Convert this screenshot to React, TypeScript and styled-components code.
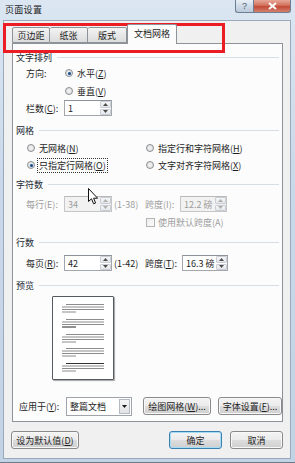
import React from "react";
import styled, { createGlobalStyle, css } from "styled-components";

const GlobalStyle = createGlobalStyle`
  html, body {
    margin: 0;
    padding: 0;
    background: #ffffff;
  }
  body {
    font-family: "Noto Sans CJK SC", "Liberation Sans", sans-serif;
    font-size: 9px;
    color: #1e1e1e;
  }
  * {
    box-sizing: border-box;
  }
`;

const PAGE_GROUPS = [7, 22, 37, 51, 66];

const App: React.FC = () => {
  return (
    <>
      <GlobalStyle />
      <Window>
        <TitleBar>
          <TitleText>页面设置</TitleText>
          <CaptionButtons>
            <CaptionButton $variant="help">?</CaptionButton>
            <CaptionButton $variant="close">
              <svg width="9" height="8" viewBox="0 0 9 8">
                <path d="M1 1 L8 7 M8 1 L1 7" stroke="#ffffff" strokeWidth="2" />
              </svg>
            </CaptionButton>
          </CaptionButtons>
        </TitleBar>

        <Client>
          <TabRow>
            <Tab $w={38}>页边距</Tab>
            <Tab $w={38}>纸张</Tab>
            <Tab $w={39}>版式</Tab>
            <Tab $w={50} $active>
              文档网格
            </Tab>
          </TabRow>

          <Panel>
            <GroupHeader>
              <span>文字排列</span>
              <HeaderLine />
            </GroupHeader>
            <Row $h={16} $indent={10}>
              <Label $w={39}>方向:</Label>
              <Radio $checked />
              <span>
                水平(<u>Z</u>)
              </span>
            </Row>
            <Row $h={16} $mt={2} $indent={49}>
              <Radio />
              <span>
                垂直(<u>V</u>)
              </span>
            </Row>
            <Row $h={18} $indent={10}>
              <Label $w={38}>
                栏数(<u>C</u>):
              </Label>
              <SpinBox value="1" width={48} />
            </Row>

            <GroupHeader $mt={5}>
              <span>网格</span>
              <HeaderLine />
            </GroupHeader>
            <RadioGrid $mt={2}>
              <RadioItem>
                <Radio />
                <span>
                  无网格(<u>N</u>)
                </span>
              </RadioItem>
              <RadioItem>
                <Radio />
                <span>
                  指定行和字符网格(<u>H</u>)
                </span>
              </RadioItem>
              <RadioItem>
                <Radio $checked />
                <FocusLabel>
                  只指定行网格(<u>O</u>)
                </FocusLabel>
              </RadioItem>
              <RadioItem>
                <Radio />
                <span>
                  文字对齐字符网格(<u>X</u>)
                </span>
              </RadioItem>
            </RadioGrid>

            <GroupHeader $mt={3}>
              <span>字符数</span>
              <HeaderLine />
            </GroupHeader>
            <Row $h={18} $mt={3} $indent={10} $disabled>
              <Label $w={38}>每行(E):</Label>
              <SpinBox value="34" width={48} disabled />
              <Label $w={31} $ml={2}>
                (1-38)
              </Label>
              <Label $w={35}>跨度(I):</Label>
              <SpinBox value="12.2 磅" width={47} disabled />
            </Row>
            <Row $h={16} $mt={1} $indent={130} $disabled>
              <CheckBox />
              <span>使用默认跨度(A)</span>
            </Row>

            <GroupHeader $mt={4}>
              <span>行数</span>
              <HeaderLine />
            </GroupHeader>
            <Row $h={18} $mt={4} $indent={10}>
              <Label $w={38}>
                每页(<u>R</u>):
              </Label>
              <SpinBox value="42" width={48} />
              <Label $w={31} $ml={2}>
                (1-42)
              </Label>
              <Label $w={37}>
                跨度(<u>T</u>):
              </Label>
              <SpinBox value="16.3 磅" width={46} />
            </Row>

            <GroupHeader $mt={5}>
              <span>预览</span>
              <HeaderLine />
            </GroupHeader>
            <PreviewArea>
              <PreviewPage>
                <svg width="60" height="82" viewBox="0 0 60 82">
                  {PAGE_GROUPS.map((y, i) => (
                    <g key={y} strokeWidth="1">
                      <line x1="13" x2="51" y1={y + 0.5} y2={y + 0.5} stroke={i === 4 ? "#333" : "#8c8c8c"} />
                      <line x1="9" x2="51" y1={y + 3} y2={y + 3} stroke="#8c8c8c" />
                      <line x1="9" x2="51" y1={y + 5.5} y2={y + 5.5} stroke="#8c8c8c" />
                      <line x1="9" x2="23" y1={y + 8} y2={y + 8} stroke={i === 1 ? "#222" : "#8c8c8c"} />
                    </g>
                  ))}
                </svg>
              </PreviewPage>
            </PreviewArea>

            <Row $h={20} $mt={15} $indent={3}>
              <Label $w={47}>
                应用于(<u>Y</u>):
              </Label>
              <Select>
                <SelectText>整篇文档</SelectText>
                <SelectArrow>
                  <svg width="5" height="3" viewBox="0 0 5 3">
                    <path d="M0 0 L5 0 L2.5 3 Z" fill="#1a1a1a" />
                  </svg>
                </SelectArrow>
              </Select>
              <Button $w={68} $ml={11}>
                绘图网格(<u>W</u>)...
              </Button>
              <Button $w={64} $ml={7}>
                字体设置(<u>F</u>)...
              </Button>
            </Row>
          </Panel>

          <BottomRow>
            <Button $w={68}>
              设为默认值(<u>D</u>)
            </Button>
            <Spacer />
            <Button $w={53} $default>
              确定
            </Button>
            <Button $w={53} $ml={8}>
              取消
            </Button>
          </BottomRow>
        </Client>

        <Highlight />
        <Cursor>
          <svg width="11" height="17" viewBox="0 0 11 17">
            <path
              d="M0.5 0.5 L0.5 13.5 L3.5 10.8 L5.6 15.8 L7.6 15 L5.6 10.2 L9.6 10.2 Z"
              fill="#ffffff"
              stroke="#111111"
              strokeWidth="1"
              strokeLinejoin="round"
            />
          </svg>
        </Cursor>
      </Window>
    </>
  );
};

export default App;

interface SpinBoxProps {
  value: string;
  width: number;
  disabled?: boolean;
}

const SpinBox: React.FC<SpinBoxProps> = ({ value, width, disabled }) => (
  <SpinFrame $w={width} $disabled={disabled}>
    <SpinValue>{value}</SpinValue>
    <SpinButtons>
      <SpinButton>
        <svg width="5" height="3" viewBox="0 0 5 3">
          <path d="M0 3 L5 3 L2.5 0 Z" fill={disabled ? "#b0b0b0" : "#4d4d4d"} />
        </svg>
      </SpinButton>
      <SpinButton>
        <svg width="5" height="3" viewBox="0 0 5 3">
          <path d="M0 0 L5 0 L2.5 3 Z" fill={disabled ? "#b0b0b0" : "#4d4d4d"} />
        </svg>
      </SpinButton>
    </SpinButtons>
  </SpinFrame>
);

const Window = styled.div`
  position: relative;
  width: 295px;
  height: 463px;
  display: flex;
  flex-direction: column;
  background: linear-gradient(180deg, #dbe6f2 0%, #c9d8ea 40%, #c3d3e6 100%);
  border-bottom: 1px solid #6c7a8a;
  overflow: hidden;
`;

const TitleBar = styled.div`
  height: 20px;
  display: flex;
  align-items: center;
  padding-left: 5px;
  flex-shrink: 0;
`;

const TitleText = styled.span`
  font-size: 9px;
  color: #1b1b1b;
  letter-spacing: 0.3px;
  margin-top: -1px;
`;

const CaptionButtons = styled.div`
  margin-left: auto;
  align-self: flex-start;
  display: flex;
  margin-right: 4px;
`;

const CaptionButton = styled.div<{ $variant: "help" | "close" }>`
  height: 13px;
  display: flex;
  align-items: center;
  justify-content: center;
  border: 1px solid #6f7f93;
  border-top: none;
  font-size: 9px;
  font-family: "Liberation Sans", sans-serif;
  ${(p) =>
    p.$variant === "help"
      ? css`
          width: 18px;
          border-right: none;
          border-radius: 0 0 0 3px;
          color: #4e5f72;
          background: linear-gradient(180deg, #e9eff6 0%, #cfdae7 50%, #bccadb 100%);
        `
      : css`
          width: 38px;
          border-radius: 0 0 3px 0;
          background: linear-gradient(180deg, #e7a797 0%, #d1705c 45%, #c24a36 55%, #d3826f 100%);
        `}
`;

const Client = styled.div`
  flex: 1;
  margin: 0 4px 4px 3px;
  padding: 0 7px 9px 8px;
  background: #f0f0f0;
  border: 1px solid #9aa9bb;
  display: flex;
  flex-direction: column;
`;

const TabRow = styled.div`
  display: flex;
  align-items: flex-end;
  height: 23px;
  padding-top: 4px;
  margin-top: -1px;
  position: relative;
  z-index: 1;
`;

const Tab = styled.div<{ $w: number; $active?: boolean }>`
  width: ${(p) => p.$w}px;
  height: ${(p) => (p.$active ? 20 : 16)}px;
  display: flex;
  align-items: center;
  justify-content: center;
  border: 1px solid #8e9299;
  border-bottom: ${(p) => (p.$active ? "none" : "1px solid #8e9299")};
  border-left: ${(p) => (p.$active ? "1px solid #8e9299" : "none")};
  margin-bottom: ${(p) => (p.$active ? -1 : 0)}px;
  padding-bottom: ${(p) => (p.$active ? 2 : 0)}px;
  background: ${(p) => (p.$active ? "#fcfcfc" : "linear-gradient(180deg, #f3f3f3 0%, #e8e8e8 50%, #dcdcdc 100%)")};
  border-radius: 2px 2px 0 0;
  color: #1e1e1e;
  &:first-child {
    border-left: 1px solid #8e9299;
  }
`;

const Panel = styled.div`
  height: 379px;
  background: #fcfcfc;
  border: 1px solid #8e9299;
  padding: 5px 3px 5px 3px;
  display: flex;
  flex-direction: column;
  flex-shrink: 0;
`;

const GroupHeader = styled.div<{ $mt?: number }>`
  height: 16px;
  margin-top: ${(p) => p.$mt ?? 0}px;
  display: flex;
  align-items: center;
  color: #202833;
  flex-shrink: 0;
`;

const HeaderLine = styled.div`
  flex: 1;
  height: 1px;
  margin-left: 5px;
  background: #d6dde4;
`;

const Row = styled.div<{ $h: number; $mt?: number; $indent: number; $disabled?: boolean }>`
  height: ${(p) => p.$h}px;
  margin-top: ${(p) => p.$mt ?? 0}px;
  padding-left: ${(p) => p.$indent}px;
  display: flex;
  align-items: center;
  flex-shrink: 0;
  color: ${(p) => (p.$disabled ? "#9d9d9d" : "#1e1e1e")};
  white-space: nowrap;
`;

const Label = styled.span<{ $w: number; $ml?: number }>`
  width: ${(p) => p.$w}px;
  margin-left: ${(p) => p.$ml ?? 0}px;
  flex-shrink: 0;
  white-space: nowrap;
`;

const Radio = styled.span<{ $checked?: boolean }>`
  width: 8px;
  height: 8px;
  border-radius: 50%;
  border: 1px solid #8b8e92;
  background: radial-gradient(circle at 50% 50%, #f4f4f4 0%, #dcdcdc 100%);
  margin-right: 4px;
  flex-shrink: 0;
  position: relative;
  ${(p) =>
    p.$checked &&
    css`
      &::after {
        content: "";
        position: absolute;
        left: 1.5px;
        top: 1.5px;
        width: 3px;
        height: 3px;
        border-radius: 50%;
        background: #1c4e86;
        box-shadow: 0 0 1px #7fb0e0;
      }
    `}
`;

const RadioGrid = styled.div<{ $mt?: number }>`
  margin-top: ${(p) => p.$mt ?? 0}px;
  padding-left: 11px;
  display: grid;
  grid-template-columns: 119px 1fr;
  grid-auto-rows: 16px;
  row-gap: 1px;
  flex-shrink: 0;
`;

const RadioItem = styled.div`
  display: flex;
  align-items: center;
  white-space: nowrap;
`;

const FocusLabel = styled.span`
  outline: 1px dotted #333;
  outline-offset: 0px;
  padding: 0 1px;
  margin-left: -1px;
`;

const CheckBox = styled.span`
  width: 9px;
  height: 9px;
  border: 1px solid #b4b4b4;
  background: linear-gradient(135deg, #eeeeee 0%, #fbfbfb 100%);
  margin-right: 3px;
  flex-shrink: 0;
`;

const SpinFrame = styled.div<{ $w: number; $disabled?: boolean }>`
  width: ${(p) => p.$w}px;
  height: 16px;
  display: flex;
  border: 1px solid ${(p) => (p.$disabled ? "#c6c6c6" : "#a2a6ad")};
  border-top-color: ${(p) => (p.$disabled ? "#b9b9b9" : "#8d9199")};
  background: ${(p) => (p.$disabled ? "#f2f2f2" : "#ffffff")};
  color: ${(p) => (p.$disabled ? "#9d9d9d" : "#1e1e1e")};
  flex-shrink: 0;
`;

const SpinValue = styled.span`
  flex: 1;
  display: flex;
  align-items: center;
  padding-left: 3px;
  white-space: nowrap;
  overflow: hidden;
`;

const SpinButtons = styled.div`
  width: 11px;
  display: flex;
  flex-direction: column;
  gap: 1px;
`;

const SpinButton = styled.div`
  flex: 1;
  display: flex;
  align-items: center;
  justify-content: center;
  border: 1px solid #c9ced6;
  background: linear-gradient(180deg, #f6f6f6 0%, #e4e7eb 100%);
  border-radius: 1px;
`;

const PreviewArea = styled.div`
  margin-top: 3px;
  height: 85px;
  padding-left: 36px;
  display: flex;
  flex-shrink: 0;
`;

const PreviewPage = styled.div`
  width: 62px;
  height: 84px;
  border: 1px solid #555a60;
  background: #ffffff;
  box-shadow: 1px 1px 1px rgba(0, 0, 0, 0.35);
  border-radius: 1px;
`;

const Select = styled.div`
  width: 66px;
  height: 19px;
  display: flex;
  border: 1px solid #9fa4ab;
  background: #ffffff;
  flex-shrink: 0;
`;

const SelectText = styled.span`
  flex: 1;
  display: flex;
  align-items: center;
  padding-left: 3px;
`;

const SelectArrow = styled.span`
  width: 11px;
  margin: 1px;
  display: flex;
  align-items: center;
  justify-content: center;
  border: 1px solid #b5bac2;
  background: linear-gradient(180deg, #f5f5f5 0%, #dfe2e6 100%);
`;

const Button = styled.div<{ $w: number; $ml?: number; $default?: boolean }>`
  width: ${(p) => p.$w}px;
  height: 18px;
  margin-left: ${(p) => p.$ml ?? 0}px;
  display: flex;
  align-items: center;
  justify-content: center;
  border: 1px solid ${(p) => (p.$default ? "#3c7fb1" : "#8a8a8a")};
  border-radius: 3px;
  background: linear-gradient(180deg, #f4f4f4 0%, #ebebeb 48%, #dddddd 52%, #cfcfcf 100%);
  box-shadow: inset 0 0 0 1px ${(p) => (p.$default ? "#a6dcf4" : "#f8f8f8")};
  color: #1e1e1e;
  white-space: nowrap;
  flex-shrink: 0;
`;

const BottomRow = styled.div`
  margin-top: 9px;
  margin-left: -1px;
  height: 18px;
  display: flex;
  align-items: center;
`;

const Spacer = styled.div`
  flex: 1;
`;

const Highlight = styled.div`
  position: absolute;
  left: 3px;
  top: 23px;
  width: 222px;
  height: 30px;
  border: 3px solid #ec1c24;
  pointer-events: none;
`;

const Cursor = styled.div`
  position: absolute;
  left: 88px;
  top: 188px;
  width: 11px;
  height: 17px;
  pointer-events: none;
  display: flex;
`;
